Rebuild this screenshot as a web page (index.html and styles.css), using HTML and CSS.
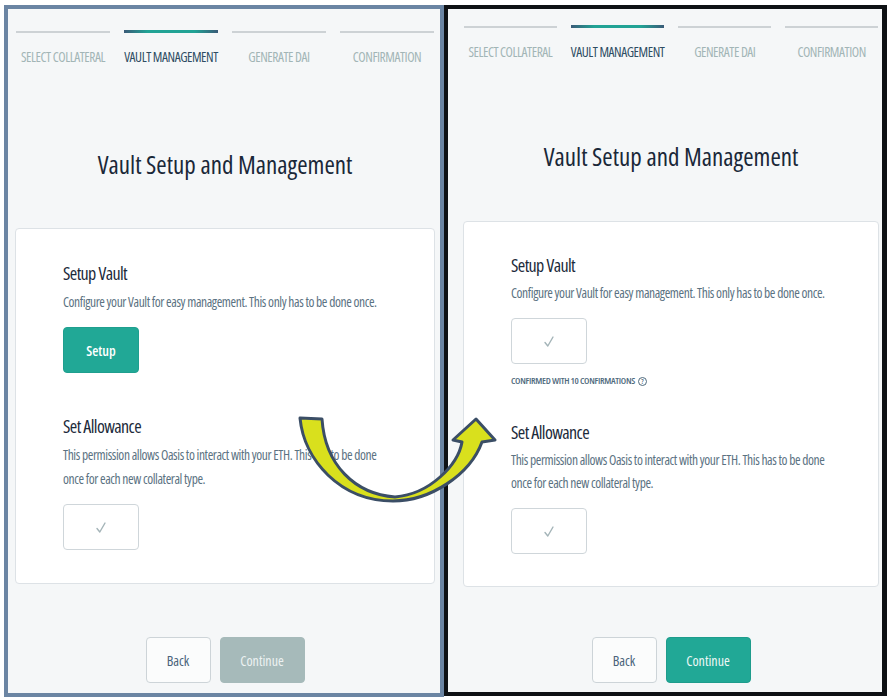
FILE: index.html
```html
<!DOCTYPE html>
<html lang="en">
<head>
<meta charset="utf-8">
<title>Vault Setup and Management</title>
<link rel="stylesheet" href="styles.css">
</head>
<body>
<div class="stage">
  <section class="panel panel-left">
    <nav class="steps">
      <div class="step"><span class="step-bar"></span><span class="step-label">Select Collateral</span></div>
      <div class="step active"><span class="step-bar"></span><span class="step-label">Vault Management</span></div>
      <div class="step"><span class="step-bar"></span><span class="step-label">Generate Dai</span></div>
      <div class="step"><span class="step-bar"></span><span class="step-label">Confirmation</span></div>
    </nav>
    <h1 class="title">Vault Setup and Management</h1>
    <div class="card">
      <div class="item">
        <h2 class="item-title">Setup Vault</h2>
        <p class="item-desc">Configure your Vault for easy management. This only has to be done once.</p>
        <button class="btn btn-primary">Setup</button>
      </div>
      <div class="item">
        <h2 class="item-title">Set Allowance</h2>
        <p class="item-desc">This permission allows Oasis to interact with your ETH. This has to be done once for each new collateral type.</p>
        <button class="btn btn-check"><svg class="check" viewBox="0 0 10 11" width="10" height="11"><path d="M1 6.5 L3.8 10 L9 1" fill="none" stroke="#a4b4b8" stroke-width="1.4" stroke-linecap="round" stroke-linejoin="round"/></svg></button>
      </div>
    </div>
    <div class="footer">
      <button class="btn btn-back">Back</button>
      <button class="btn btn-continue disabled">Continue</button>
    </div>
  </section>

  <section class="panel panel-right">
    <nav class="steps">
      <div class="step"><span class="step-bar"></span><span class="step-label">Select Collateral</span></div>
      <div class="step active"><span class="step-bar"></span><span class="step-label">Vault Management</span></div>
      <div class="step"><span class="step-bar"></span><span class="step-label">Generate Dai</span></div>
      <div class="step"><span class="step-bar"></span><span class="step-label">Confirmation</span></div>
    </nav>
    <h1 class="title">Vault Setup and Management</h1>
    <div class="card">
      <div class="item has-note">
        <h2 class="item-title">Setup Vault</h2>
        <p class="item-desc">Configure your Vault for easy management. This only has to be done once.</p>
        <button class="btn btn-check"><svg class="check" viewBox="0 0 10 11" width="10" height="11"><path d="M1 6.5 L3.8 10 L9 1" fill="none" stroke="#a4b4b8" stroke-width="1.4" stroke-linecap="round" stroke-linejoin="round"/></svg></button>
        <p class="note">Confirmed with 10 confirmations <span class="help">?</span></p>
      </div>
      <div class="item">
        <h2 class="item-title">Set Allowance</h2>
        <p class="item-desc">This permission allows Oasis to interact with your ETH. This has to be done once for each new collateral type.</p>
        <button class="btn btn-check"><svg class="check" viewBox="0 0 10 11" width="10" height="11"><path d="M1 6.5 L3.8 10 L9 1" fill="none" stroke="#a4b4b8" stroke-width="1.4" stroke-linecap="round" stroke-linejoin="round"/></svg></button>
      </div>
    </div>
    <div class="footer">
      <button class="btn btn-back">Back</button>
      <button class="btn btn-continue">Continue</button>
    </div>
  </section>

  <svg class="arrow" viewBox="0 0 890 699" width="890" height="699" aria-hidden="true">
    <path d="M300 418 C304 460 340 501 393 501 C430 501 470 475 482 442 L495 440 L476 419 L453 440 L462 442 C458 465 430 494 395 497 C355 494 325 465 322 419 Z" fill="#d9e01d" stroke="#3b4e66" stroke-width="3" stroke-linejoin="round"/>
  </svg>
</div>
</body>
</html>
```

FILE: styles.css
```css
* { box-sizing: border-box; }

html, body {
  margin: 0;
  padding: 0;
  background: #ffffff;
}

body {
  font-family: "Open Sans", "Noto Sans", "Liberation Sans", sans-serif;
  font-stretch: 75%;
  width: 890px;
  height: 699px;
  overflow: hidden;
}

.stage {
  position: relative;
  display: flex;
  padding: 5px 3px 2px 4px;
  height: 699px;
}

.panel {
  display: flex;
  flex-direction: column;
  background: #f5f7f8;
  border: 4px solid #6b85a3;
  height: 692px;
}

.panel-left {
  width: 440px;
  padding: 21px 5px 10px 7px;
}

.panel-right {
  width: 443px;
  border-color: #0e1114;
  border-width: 4px 5px 4px 4px;
  height: 691px;
  padding: 16px 3px 9px 15px;
}

/* steps */
.steps {
  display: grid;
  grid-template-columns: repeat(4, 1fr);
  column-gap: 14px;
  margin: 0 1px;
}

.step {
  display: flex;
  flex-direction: column;
  align-items: center;
}

.step-bar {
  display: block;
  width: 100%;
  height: 2px;
  margin-top: 1px;
  background: #cdd2d5;
}

.step.active .step-bar {
  height: 3px;
  margin-top: 0;
  background: linear-gradient(90deg, #3a5b78 0%, #21a395 25%, #21a395 75%, #3a5b78 100%);
}

.step-label {
  margin-top: 16px;
  font-size: 13.5px;
  line-height: 16px;
  letter-spacing: -0.45px;
  text-transform: uppercase;
  color: #a2b5b6;
  white-space: nowrap;
}

.step.active .step-label {
  color: #2e4d63;
}

/* title */
.title {
  margin: 82px 0 0;
  text-align: center;
  font-size: 25px;
  line-height: 34px;
  font-weight: 400;
  color: #1a2838;
}

.panel-right .title { margin-top: 79px; }

/* card */
.card {
  margin-top: 47px;
  background: #ffffff;
  border: 1px solid #dde2e6;
  border-radius: 4px;
  padding: 32px 40px 33px 47px;
}

.panel-right .card { margin-top: 48px; padding-top: 31px; padding-bottom: 32px; }

.item + .item { margin-top: 41px; }
.item.has-note + .item { margin-top: 31px; }

.item-title {
  margin: 0;
  font-size: 18px;
  line-height: 24px;
  letter-spacing: -0.6px;
  font-weight: 400;
  color: #1b2a3a;
}

.item-desc {
  margin: 5px 0 0;
  font-size: 13.5px;
  line-height: 24px;
  letter-spacing: -0.4px;
  color: #5b7282;
}

.panel-right .item-desc { line-height: 23px; }

.note {
  margin: 9px 0 0;
  font-size: 9.5px;
  line-height: 16px;
  letter-spacing: -0.3px;
  font-weight: 600;
  text-transform: uppercase;
  color: #4f6a7d;
  display: flex;
  align-items: center;
  gap: 3px;
}

.help {
  display: inline-flex;
  align-items: center;
  justify-content: center;
  width: 9px;
  height: 9px;
  border: 1px solid #4f6a7d;
  border-radius: 50%;
  font-size: 7px;
  letter-spacing: 0;
  line-height: 1;
}

/* buttons */
.btn {
  display: flex;
  align-items: center;
  justify-content: center;
  margin: 0;
  padding: 0;
  height: 46px;
  border-radius: 4px;
  border: 1px solid transparent;
  font-family: inherit;
  font-stretch: 75%;
  font-size: 14px;
  cursor: pointer;
}

.item .btn { margin-top: 13px; width: 76px; }

.btn-primary {
  background: #21a896;
  border-color: #1f9f8f;
  color: #ffffff;
  font-weight: 600;
}

.btn-check {
  background: #ffffff;
  border-color: #cfd6da;
}

.footer {
  margin-top: auto;
  display: flex;
  justify-content: center;
  gap: 9px;
}

.btn-back {
  width: 65px;
  background: #fbfcfc;
  border-color: #cdd4d8;
  color: #49637a;
}

.btn-continue {
  width: 85px;
  background: #21a896;
  border-color: #1e9c8c;
  color: #eef7f5;
}

.btn-continue.disabled {
  background: #a6baba;
  border-color: #a6baba;
  color: #edf2f2;
}

/* overlay arrow */
.arrow {
  position: absolute;
  left: 0;
  top: 0;
  pointer-events: none;
  z-index: 5;
}
```
